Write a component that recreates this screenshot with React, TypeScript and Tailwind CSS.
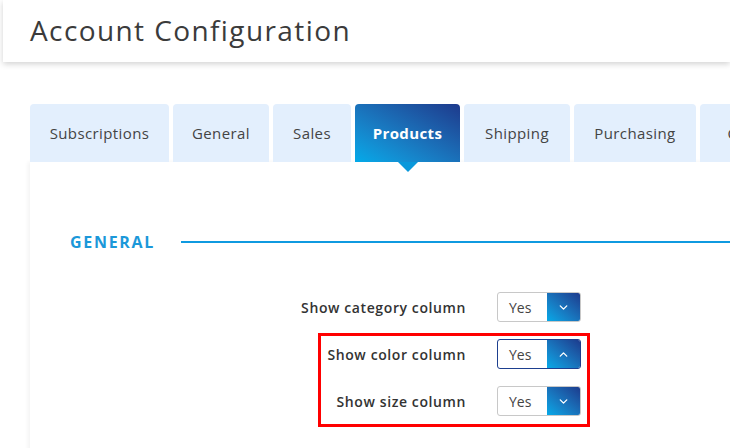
import { ChevronDown, ChevronUp } from "lucide-react"

const tabs = [
  { label: "Subscriptions", w: "w-[139px]" },
  { label: "General", w: "w-[96px]" },
  { label: "Sales", w: "w-[78px]" },
  { label: "Products", w: "w-[105px]", active: true },
  { label: "Shipping", w: "w-[106px]" },
  { label: "Purchasing", w: "w-[122px]" },
  { label: "Catalog", w: "w-[110px]" },
]

const rows = [
  { label: "Show category column", open: false },
  { label: "Show color column", open: true },
  { label: "Show size column", open: false },
]

function YesSelect({ open }: { open: boolean }) {
  return (
    <div className={`flex h-[30px] w-[84px] overflow-hidden rounded-[3px] border ${open ? "border-[#1d3f8f]" : "border-[#c8c8c8]"}`}>
      <div className="flex flex-1 items-center pl-[11px] text-[14px] text-[#444]">Yes</div>
      <div className="flex w-[33px] items-center justify-center bg-gradient-to-tr from-[#03a9e8] to-[#1c3b8d] text-white">
        {open ? <ChevronUp className="h-[13px] w-[13px]" strokeWidth={2.5} /> : <ChevronDown className="h-[13px] w-[13px]" strokeWidth={2.5} />}
      </div>
    </div>
  )
}

export default function App() {
  return (
    <div className="h-[448px] w-[730px] overflow-hidden bg-white" style={{ fontFamily: "'Open Sans', 'Liberation Sans', sans-serif" }}>
      <div className="ml-[3px] flex h-[62px] items-center bg-white pb-[3px] pl-[27px] shadow-[0_2px_6px_rgba(0,0,0,0.18)]">
        <h1 className="text-[28px] font-normal tracking-[1.4px] text-[#3b3b3b]">Account Configuration</h1>
      </div>

      <div className="mt-[42px] flex gap-[4px] pl-[30px]">
        {tabs.map((t) => (
          <div
            key={t.label}
            className={`relative flex h-[58px] shrink-0 items-center justify-center rounded-t-[4px] text-[15px] tracking-[0.4px] ${t.w} ${
              t.active ? "bg-gradient-to-tr from-[#02aae9] to-[#1d3a8c] font-bold text-white" : "bg-[#e3effd] text-[#444]"
            }`}
          >
            {t.label}
            {t.active && (
              <div className="absolute left-1/2 top-full h-0 w-0 -translate-x-1/2 border-x-[10px] border-t-[10px] border-x-transparent border-t-[#0998db]" />
            )}
          </div>
        ))}
      </div>

      <div className="ml-[30px] h-[300px] bg-white shadow-[-2px_0_4px_rgba(0,0,0,0.05)]">
        <div className="flex items-center pl-[40px] pt-[68px]">
          <span className="text-[16px] font-bold tracking-[1.7px] text-[#1b98d9]">GENERAL</span>
          <div className="ml-[26px] h-[1.5px] flex-1 bg-[#0f9ae0]" />
        </div>

        <div className="relative mt-[38px] flex flex-col gap-[17px]">
          {rows.map((r) => (
            <div key={r.label} className="flex items-center">
              <div className="w-[436px] text-right text-[14px] font-semibold tracking-[0.6px] text-[#333]">{r.label}</div>
              <div className="ml-[31px]">
                <YesSelect open={r.open} />
              </div>
            </div>
          ))}
          <div className="pointer-events-none absolute left-[288px] top-[41px] h-[94px] w-[272px] border-[3px] border-[#f00]" />
        </div>
      </div>
    </div>
  )
}
